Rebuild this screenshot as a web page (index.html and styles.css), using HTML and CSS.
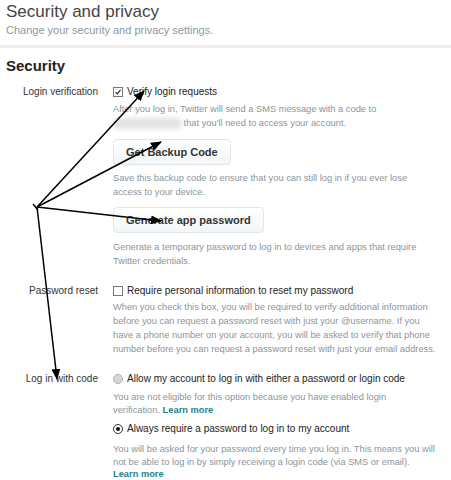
FILE: index.html
```html
<!DOCTYPE html>
<html lang="en">
<head>
<meta name="viewport" content="width=device-width, initial-scale=1.0">
  <title>Security and privacy</title>
  <link rel="stylesheet" href="styles.css">
</head>
<body>

  <div class="pagina">
    <div class="cabecera">
      <h1>Security and privacy</h1>
      <p class="sub">Change your security and privacy settings.</p>
    </div>

    <div class="seccion">
      <h2>Security</h2>

      <div class="campo">
        <div class="etiqueta">Login verification</div>
        <div class="controles">
          <div class="opcion"><span class="caja marcada"><svg viewBox="0 0 10 10"><path d="M2 5.2 L4.2 7.4 L8.2 2.4"/></svg></span>Verify login requests</div>
          <p class="ayuda">After you log in, Twitter will send a SMS message with a code to<br><span class="borroso"></span> that you'll need to access your account.</p>
          <button class="boton">Get Backup Code</button>
          <p class="ayuda ayuda-b">Save this backup code to ensure that you can still log in if you ever lose<br>access to your device.</p>
          <button class="boton boton-2">Generate app password</button>
          <p class="ayuda ayuda-c">Generate a temporary password to log in to devices and apps that require<br>Twitter credentials.</p>
        </div>
      </div>

      <div class="campo campo-2">
        <div class="etiqueta">Password reset</div>
        <div class="controles">
          <div class="opcion"><span class="caja"></span>Require personal information to reset my password</div>
          <p class="ayuda ayuda-d">When you check this box, you will be required to verify additional information<br>before you can request a password reset with just your @username. If you<br>have a phone number on your account, you will be asked to verify that phone<br>number before you can request a password reset with just your email address.</p>
        </div>
      </div>

      <div class="campo campo-2">
        <div class="etiqueta">Log in with code</div>
        <div class="controles">
          <div class="opcion"><span class="radio apagado"></span>Allow my account to log in with either a password or login code</div>
          <p class="ayuda corta">You are not eligible for this option because you have enabled login<br>verification. <a href="#">Learn more</a></p>
          <div class="opcion opcion-2"><span class="radio activo"></span>Always require a password to log in to my account</div>
          <p class="ayuda corta corta-2">You will be asked for your password every time you log in. This means you will<br>not be able to log in by simply receiving a login code (via SMS or email).<br><a href="#">Learn more</a></p>
        </div>
      </div>
    </div>

    <svg class="flechas" viewBox="0 0 451 480">
      <defs>
        <marker id="punta" markerUnits="userSpaceOnUse" markerWidth="11" markerHeight="9" refX="10" refY="4.5" orient="auto">
          <path d="M0 0 L11 4.5 L0 9 Z"/>
        </marker>
      </defs>
      <line x1="37" y1="207" x2="144" y2="91" marker-end="url(#punta)"/>
      <line x1="37" y1="207" x2="161" y2="142" marker-end="url(#punta)"/>
      <line x1="37" y1="207" x2="161" y2="221" marker-end="url(#punta)"/>
      <line x1="37" y1="207" x2="57" y2="379" marker-end="url(#punta)"/>
      <line x1="33" y1="204" x2="38" y2="210"/>
    </svg>
  </div>

</body>
</html>
```

FILE: styles.css
```css
* {
  margin: 0;
  padding: 0;
  box-sizing: border-box;
}

body {
  background: #ffffff;
  font-family: "Liberation Sans", Arial, sans-serif;
  color: #333333;
}

.pagina {
  position: relative;
  width: 451px;
  height: 480px;
  overflow: hidden;
}

.cabecera {
  padding: 1px 6px 8px;
  border-bottom: 3px solid #eeeeee;
}

.cabecera h1 {
  font-size: 17px;
  line-height: 22px;
  font-weight: normal;
  color: #444444;
}

.cabecera .sub {
  font-size: 11px;
  line-height: 14px;
  color: #8e979e;
}

.seccion {
  padding-top: 9px;
}

.seccion h2 {
  margin-left: 6px;
  font-size: 15px;
  line-height: 18px;
  font-weight: bold;
  color: #222222;
}

.campo {
  display: flex;
  margin-top: 10px;
}

.campo-2 { margin-top: 16px; }

.etiqueta {
  width: 98px;
  margin-right: 15px;
  flex-shrink: 0;
  text-align: right;
  font-size: 10px;
  line-height: 14px;
  color: #333333;
}

.controles {
  width: 338px;
  white-space: nowrap;
}

.opcion {
  display: flex;
  align-items: center;
  font-size: 10px;
  line-height: 14px;
  color: #222222;
}

.opcion-2 { margin-top: 6px; }

.caja {
  width: 10px;
  height: 10px;
  margin-right: 4px;
  border: 1px solid #767676;
  background: #ffffff;
  display: flex;
}

.caja svg {
  width: 8px;
  height: 8px;
  fill: none;
  stroke: #222222;
  stroke-width: 1.4;
}

.radio {
  width: 10px;
  height: 10px;
  margin-right: 4px;
  border-radius: 50%;
  display: flex;
  align-items: center;
  justify-content: center;
}

.apagado {
  background: #d6d6d6;
  border: 1px solid #b0b0b0;
}

.activo {
  background: #ffffff;
  border: 1px solid #333333;
}

.activo::after {
  content: "";
  width: 4px;
  height: 4px;
  border-radius: 50%;
  background: #111111;
}

.ayuda {
  margin-top: 3px;
  font-size: 9.3px;
  line-height: 14px;
  color: #8c959c;
}

.ayuda-b { margin-top: 6px; }
.ayuda-c { margin-top: 7px; }
.ayuda-d { margin-top: 2px; }

.corta {
  margin-top: 5px;
  line-height: 12.5px;
}

.corta-2 { margin-top: 7px; }

.ayuda a {
  color: #2a7f8c;
  font-weight: bold;
  text-decoration: none;
}

.borroso {
  display: inline-block;
  width: 68px;
  height: 11px;
  vertical-align: middle;
  background: #e2e2e2;
  border-radius: 4px;
  filter: blur(2.5px);
}

.boton {
  display: block;
  height: 26px;
  margin-top: 9px;
  padding: 0 12px;
  border: 1px solid #e1e6ea;
  border-radius: 4px;
  background: linear-gradient(#ffffff, #f3f6f8);
  font-family: "Liberation Sans", Arial, sans-serif;
  font-size: 11px;
  font-weight: bold;
  color: #333333;
}

.boton-2 { margin-top: 8px; }

.flechas {
  position: absolute;
  top: 0;
  left: 0;
  width: 451px;
  height: 480px;
  pointer-events: none;
}

.flechas line {
  stroke: #000000;
  stroke-width: 1.5;
}

.flechas marker path {
  fill: #000000;
}
```
